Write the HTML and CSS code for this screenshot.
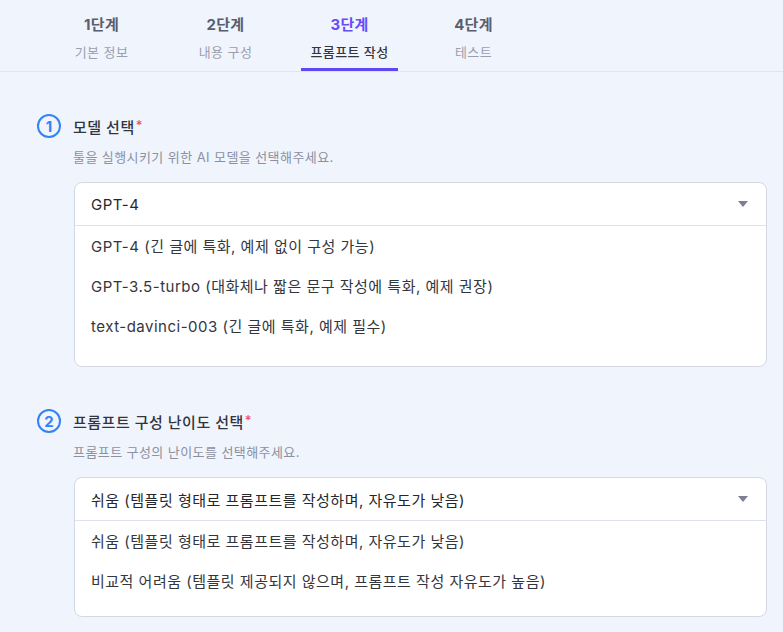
FILE: index.html
```html
<!DOCTYPE html>
<html lang="ko">
<head>
  <meta charset="UTF-8">
  <title>프롬프트 작성</title>
  <link rel="stylesheet" href="styles.css">
</head>
<body>

  <div class="steps">
    <div class="step">
      <div class="step-num">1단계</div>
      <div class="step-name">기본 정보</div>
    </div>
    <div class="step">
      <div class="step-num">2단계</div>
      <div class="step-name">내용 구성</div>
    </div>
    <div class="step active">
      <div class="step-num">3단계</div>
      <div class="step-name">프롬프트 작성</div>
    </div>
    <div class="step">
      <div class="step-num">4단계</div>
      <div class="step-name">테스트</div>
    </div>
  </div>

  <div class="content">
    <div class="field">
      <div class="field-title">
        <span class="badge">1</span>
        <span class="label">모델 선택<span class="req">*</span></span>
      </div>
      <p class="desc">툴을 실행시키기 위한 AI 모델을 선택해주세요.</p>
      <div class="select">
        <div class="select-head">
          <span>GPT-4</span>
          <span class="arrow"></span>
        </div>
        <ul class="options">
          <li>GPT-4 (긴 글에 특화, 예제 없이 구성 가능)</li>
          <li>GPT-3.5-turbo (대화체나 짧은 문구 작성에 특화, 예제 권장)</li>
          <li>text-davinci-003 (긴 글에 특화, 예제 필수)</li>
        </ul>
      </div>
    </div>

    <div class="field">
      <div class="field-title">
        <span class="badge">2</span>
        <span class="label">프롬프트 구성 난이도 선택<span class="req">*</span></span>
      </div>
      <p class="desc">프롬프트 구성의 난이도를 선택해주세요.</p>
      <div class="select">
        <div class="select-head">
          <span>쉬움 (템플릿 형태로 프롬프트를 작성하며, 자유도가 낮음)</span>
          <span class="arrow"></span>
        </div>
        <ul class="options short">
          <li>쉬움 (템플릿 형태로 프롬프트를 작성하며, 자유도가 낮음)</li>
          <li>비교적 어려움 (템플릿 제공되지 않으며, 프롬프트 작성 자유도가 높음)</li>
        </ul>
      </div>
    </div>
  </div>

</body>
</html>
```

FILE: styles.css
```css
body {
  margin: 0;
  background: #f0f4fd;
  font-family: "Inter", "Noto Sans CJK KR", sans-serif;
  color: #2e3038;
}

.steps {
  display: flex;
  gap: 27px;
  padding-left: 53px;
  border-bottom: 1px solid #dfe4f1;
}

.step {
  width: 97px;
  padding: 14px 0 6px;
  text-align: center;
  border-bottom: 3px solid transparent;
}

.step-num {
  font-size: 15px;
  line-height: 22px;
  font-weight: 700;
  color: #5a5e6e;
  letter-spacing: 0.3px;
}

.step-name {
  margin-top: 6px;
  font-size: 13px;
  line-height: 20px;
  color: #9a9eae;
  letter-spacing: 0.4px;
}

.step.active {
  border-bottom-color: #6046f5;
}

.step.active .step-num {
  color: #6a4cf6;
}

.step.active .step-name {
  color: #34363f;
  font-weight: 500;
}

.content {
  padding: 42px 16px 0 37px;
}

.field + .field {
  margin-top: 42px;
}

.field-title {
  display: flex;
  align-items: center;
  gap: 12px;
  height: 24px;
}

.badge {
  width: 24px;
  height: 24px;
  box-sizing: border-box;
  border: 2px solid #3383f5;
  border-radius: 50%;
  display: flex;
  align-items: center;
  justify-content: center;
  font-size: 15px;
  font-weight: 700;
  color: #3383f5;
}

.label {
  font-size: 15px;
  font-weight: 500;
  color: #33353d;
  letter-spacing: 0.5px;
}

.req {
  color: #f0505a;
  font-size: 13px;
  margin-left: 1px;
  position: relative;
  top: -3px;
}

.desc {
  margin: 9px 0 0 36px;
  font-size: 13px;
  line-height: 20px;
  color: #8c90a0;
  letter-spacing: 0.42px;
}

.select {
  margin: 15px 0 0 37px;
  background: #fff;
  border: 1px solid #d4d8e5;
  border-radius: 8px;
}

.select-head {
  height: 42px;
  padding: 0 18px 0 16px;
  display: flex;
  align-items: center;
  justify-content: space-between;
  font-size: 15px;
  color: #25272e;
  border-bottom: 1px solid #dde1ec;
  letter-spacing: 0.5px;
}

.arrow {
  width: 0;
  height: 0;
  border-left: 5px solid transparent;
  border-right: 5px solid transparent;
  border-top: 6px solid #7c8092;
}

.options {
  list-style: none;
  margin: 0;
  padding: 1px 0 19px;
}

.options.short {
  padding-bottom: 14px;
}

.options li {
  padding-left: 16px;
  line-height: 40px;
  font-size: 15px;
  color: #34363e;
  letter-spacing: 0.5px;
}
```
